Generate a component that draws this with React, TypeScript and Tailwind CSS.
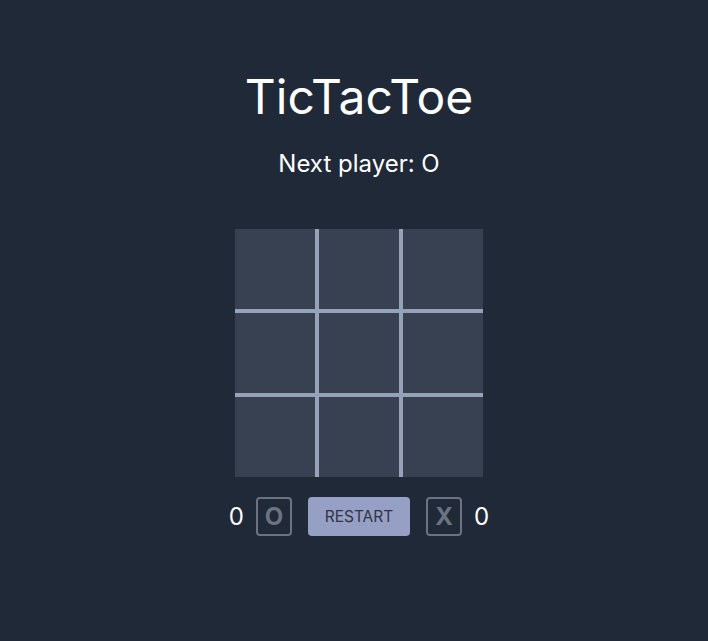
import { useState } from "react";

const cells = Array.from({ length: 9 }, (_, i) => i);

export default function App() {
  const [board] = useState<(string | null)[]>(Array(9).fill(null));

  return (
    <div className="min-h-screen bg-[#1f2937] font-['Inter',sans-serif] text-white">
      <div className="flex flex-col items-center pt-[70px] pl-[10px]">
        <h1 className="text-5xl leading-[54px] font-normal">TicTacToe</h1>
        <p className="mt-6 text-2xl leading-8">Next player: O</p>

        <div className="mt-[49px] grid grid-cols-3 gap-1 bg-[#94a3b8]">
          {cells.map((i) => (
            <div key={i} className="flex size-20 items-center justify-center bg-[#374151] text-4xl">
              {board[i]}
            </div>
          ))}
        </div>

        <div className="mt-5 flex items-center gap-4">
          <div className="flex items-center gap-3">
            <span className="text-2xl">0</span>
            <div className="flex h-[39px] w-9 items-center justify-center rounded border-2 border-[#6b7280] text-2xl font-bold text-[#6b7280]">
              O
            </div>
          </div>
          <button className="h-[39px] w-[102px] rounded bg-[#969fc4] text-[15.5px] text-[#2f3545] uppercase">
            Restart
          </button>
          <div className="flex items-center gap-3">
            <div className="flex h-[39px] w-9 items-center justify-center rounded border-2 border-[#6b7280] text-2xl font-bold text-[#6b7280]">
              X
            </div>
            <span className="text-2xl">0</span>
          </div>
        </div>
      </div>
    </div>
  );
}
